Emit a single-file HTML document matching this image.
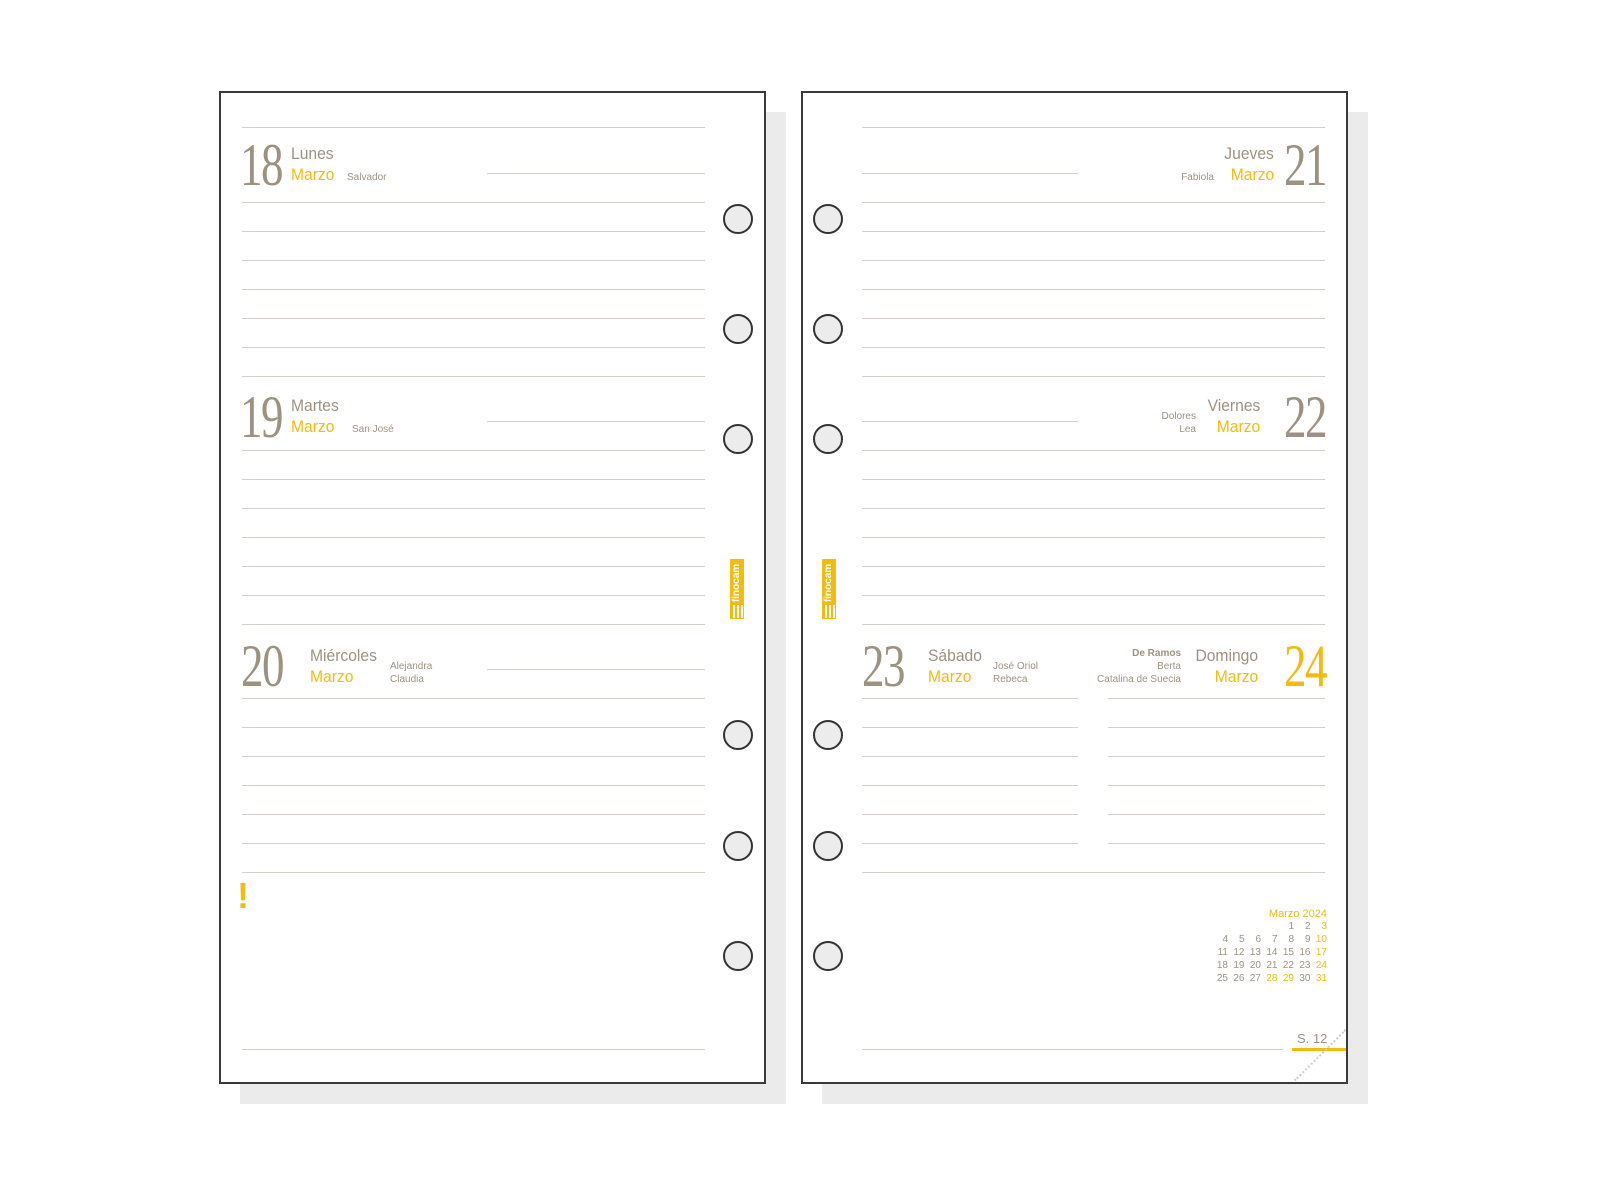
<!DOCTYPE html>
<html><head><meta charset="utf-8"><style>
*{margin:0;padding:0;box-sizing:border-box}
body{width:1600px;height:1200px;background:#fff;position:relative;overflow:hidden;font-family:"Liberation Sans",sans-serif}
.sh{position:absolute;background:#ebebeb;width:546px;height:992px}
.pg{position:absolute;background:#fff;border:2px solid #3a3a3a;width:547px;height:993px}
.l{position:absolute;height:1px;background:#d5d0c7}
.h{position:absolute;width:30px;height:30px;border-radius:50%;border:2px solid #333;background:#ececec}
.t{position:absolute;line-height:1;white-space:nowrap}
.n{font-family:"Liberation Serif",serif;font-size:60px;color:#9d9280;letter-spacing:-2px;transform:scaleX(.75);transform-origin:left top}
.nr{transform-origin:right top}
.d{font-size:17px;color:#9d9280;transform:scaleX(.92);transform-origin:left top}
.m{font-size:17px;color:#f2bb0f;transform:scaleX(.92);transform-origin:left top}
.r.d,.r.m{transform-origin:right top}
.s{font-size:10px;color:#9d9280}
.logo{position:absolute;width:14px;height:60px;background:#f2bb0f;overflow:hidden}
.logo span{position:absolute;left:-15px;top:17px;width:44px;text-align:center;transform:rotate(-90deg);color:#fff;font-size:10px;font-weight:bold;line-height:14px}
.logo i{position:absolute;bottom:1px;width:2px;height:13px;background:#fff}
.cal{position:absolute;font-size:10px;color:#9d9280;text-align:right}
.cal div{height:13px}
.cal b{font-weight:normal;display:inline-block;width:16.5px}
.y{color:#f2bb0f}
</style></head><body>
<div class="sh" style="left:240px;top:112px"></div>
<div class="sh" style="left:822px;top:112px"></div>
<div class="pg" style="left:219px;top:91px"></div>
<div class="pg" style="left:801px;top:91px"></div>

<!-- left lines -->
<div class="l" style="left:242px;top:127px;width:463px"></div>
<div class="l" style="left:487px;top:173px;width:218px"></div>
<div class="l" style="left:242px;top:202px;width:463px"></div>
<div class="l" style="left:242px;top:231px;width:463px"></div>
<div class="l" style="left:242px;top:260px;width:463px"></div>
<div class="l" style="left:242px;top:289px;width:463px"></div>
<div class="l" style="left:242px;top:318px;width:463px"></div>
<div class="l" style="left:242px;top:347px;width:463px"></div>
<div class="l" style="left:242px;top:376px;width:463px"></div>
<div class="l" style="left:487px;top:421px;width:218px"></div>
<div class="l" style="left:242px;top:450px;width:463px"></div>
<div class="l" style="left:242px;top:479px;width:463px"></div>
<div class="l" style="left:242px;top:508px;width:463px"></div>
<div class="l" style="left:242px;top:537px;width:463px"></div>
<div class="l" style="left:242px;top:566px;width:463px"></div>
<div class="l" style="left:242px;top:595px;width:463px"></div>
<div class="l" style="left:242px;top:624px;width:463px"></div>
<div class="l" style="left:487px;top:669px;width:218px"></div>
<div class="l" style="left:242px;top:698px;width:463px"></div>
<div class="l" style="left:242px;top:727px;width:463px"></div>
<div class="l" style="left:242px;top:756px;width:463px"></div>
<div class="l" style="left:242px;top:785px;width:463px"></div>
<div class="l" style="left:242px;top:814px;width:463px"></div>
<div class="l" style="left:242px;top:843px;width:463px"></div>
<div class="l" style="left:242px;top:872px;width:463px"></div>
<div class="l" style="left:242px;top:1049px;width:463px"></div>

<!-- right lines -->
<div class="l" style="left:862px;top:127px;width:463px"></div>
<div class="l" style="left:862px;top:173px;width:216px"></div>
<div class="l" style="left:862px;top:202px;width:463px"></div>
<div class="l" style="left:862px;top:231px;width:463px"></div>
<div class="l" style="left:862px;top:260px;width:463px"></div>
<div class="l" style="left:862px;top:289px;width:463px"></div>
<div class="l" style="left:862px;top:318px;width:463px"></div>
<div class="l" style="left:862px;top:347px;width:463px"></div>
<div class="l" style="left:862px;top:376px;width:463px"></div>
<div class="l" style="left:862px;top:421px;width:216px"></div>
<div class="l" style="left:862px;top:450px;width:463px"></div>
<div class="l" style="left:862px;top:479px;width:463px"></div>
<div class="l" style="left:862px;top:508px;width:463px"></div>
<div class="l" style="left:862px;top:537px;width:463px"></div>
<div class="l" style="left:862px;top:566px;width:463px"></div>
<div class="l" style="left:862px;top:595px;width:463px"></div>
<div class="l" style="left:862px;top:624px;width:463px"></div>
<div class="l" style="left:862px;top:698px;width:216px"></div><div class="l" style="left:1108px;top:698px;width:217px"></div>
<div class="l" style="left:862px;top:727px;width:216px"></div><div class="l" style="left:1108px;top:727px;width:217px"></div>
<div class="l" style="left:862px;top:756px;width:216px"></div><div class="l" style="left:1108px;top:756px;width:217px"></div>
<div class="l" style="left:862px;top:785px;width:216px"></div><div class="l" style="left:1108px;top:785px;width:217px"></div>
<div class="l" style="left:862px;top:814px;width:216px"></div><div class="l" style="left:1108px;top:814px;width:217px"></div>
<div class="l" style="left:862px;top:843px;width:216px"></div><div class="l" style="left:1108px;top:843px;width:217px"></div>
<div class="l" style="left:862px;top:872px;width:463px"></div>
<div class="l" style="left:862px;top:1049px;width:421px"></div>
<div style="position:absolute;left:1292px;top:1048px;width:54px;height:3px;background:#f2bb0f"></div>
<div style="position:absolute;left:1294px;top:1080px;width:72px;height:0;border-top:2px dotted #ccc;transform:rotate(-45deg);transform-origin:left top"></div>

<!-- holes -->
<div class="h" style="left:723px;top:204px"></div><div class="h" style="left:723px;top:314px"></div><div class="h" style="left:723px;top:424px"></div>
<div class="h" style="left:723px;top:720px"></div><div class="h" style="left:723px;top:831px"></div><div class="h" style="left:723px;top:941px"></div>
<div class="h" style="left:813px;top:204px"></div><div class="h" style="left:813px;top:314px"></div><div class="h" style="left:813px;top:424px"></div>
<div class="h" style="left:813px;top:720px"></div><div class="h" style="left:813px;top:831px"></div><div class="h" style="left:813px;top:941px"></div>

<!-- logos -->
<div class="logo" style="left:730px;top:559px"><span>finocam</span><i style="left:3px"></i><i style="left:7px"></i><i style="left:11px"></i></div>
<div class="logo" style="left:822px;top:559px"><span>finocam</span><i style="left:3px"></i><i style="left:7px"></i><i style="left:11px"></i></div>

<!-- left headers -->
<div class="t n" style="left:240px;top:135px">18</div>
<div class="t d" style="left:291px;top:145px">Lunes</div>
<div class="t m" style="left:291px;top:166px">Marzo</div>
<div class="t s" style="left:347px;top:173px">Salvador</div>

<div class="t n" style="left:240px;top:387px">19</div>
<div class="t d" style="left:291px;top:397px">Martes</div>
<div class="t m" style="left:291px;top:418px">Marzo</div>
<div class="t s" style="left:352px;top:425px">San José</div>

<div class="t n" style="left:241px;top:636px">20</div>
<div class="t d" style="left:310px;top:647px">Miércoles</div>
<div class="t m" style="left:310px;top:668px">Marzo</div>
<div class="t s" style="left:390px;top:662px">Alejandra</div>
<div class="t s" style="left:390px;top:675px">Claudia</div>

<div class="t" style="left:237px;top:878px;font-size:36px;font-weight:bold;color:#f2bb0f">!</div>

<!-- right headers -->
<div class="t n nr" style="right:274px;top:135px">21</div>
<div class="t d r" style="right:326px;top:145px">Jueves</div>
<div class="t m r" style="right:326px;top:166px">Marzo</div>
<div class="t s" style="right:386px;top:173px">Fabiola</div>

<div class="t n nr" style="right:274px;top:387px">22</div>
<div class="t d r" style="right:340px;top:397px">Viernes</div>
<div class="t m r" style="right:340px;top:418px">Marzo</div>
<div class="t s" style="right:404px;top:412px">Dolores</div>
<div class="t s" style="right:404px;top:425px">Lea</div>

<div class="t n" style="left:862px;top:636px">23</div>
<div class="t d" style="left:928px;top:647px">Sábado</div>
<div class="t m" style="left:928px;top:668px">Marzo</div>
<div class="t s" style="left:993px;top:662px">José Oriol</div>
<div class="t s" style="left:993px;top:675px">Rebeca</div>

<div class="t n nr" style="right:274px;top:636px;color:#f2bb0f">24</div>
<div class="t d r" style="right:342px;top:647px">Domingo</div>
<div class="t m r" style="right:342px;top:668px">Marzo</div>
<div class="t s" style="right:419px;top:649px;font-weight:bold">De Ramos</div>
<div class="t s" style="right:419px;top:662px">Berta</div>
<div class="t s" style="right:419px;top:675px">Catalina de Suecia</div>

<!-- calendar -->
<div class="cal" style="right:273px;top:908px">
<div class="y" style="font-size:11px">Marzo 2024</div>
<div><b>1</b><b>2</b><b class="y">3</b></div>
<div><b>4</b><b>5</b><b>6</b><b>7</b><b>8</b><b>9</b><b class="y">10</b></div>
<div><b>11</b><b>12</b><b>13</b><b>14</b><b>15</b><b>16</b><b class="y">17</b></div>
<div><b>18</b><b>19</b><b>20</b><b>21</b><b>22</b><b>23</b><b class="y">24</b></div>
<div><b>25</b><b>26</b><b>27</b><b class="y">28</b><b class="y">29</b><b>30</b><b class="y">31</b></div>
</div>
<div class="t" style="left:1297px;top:1032px;font-size:13px;color:#9d9280">S. 12</div>
</body></html>
